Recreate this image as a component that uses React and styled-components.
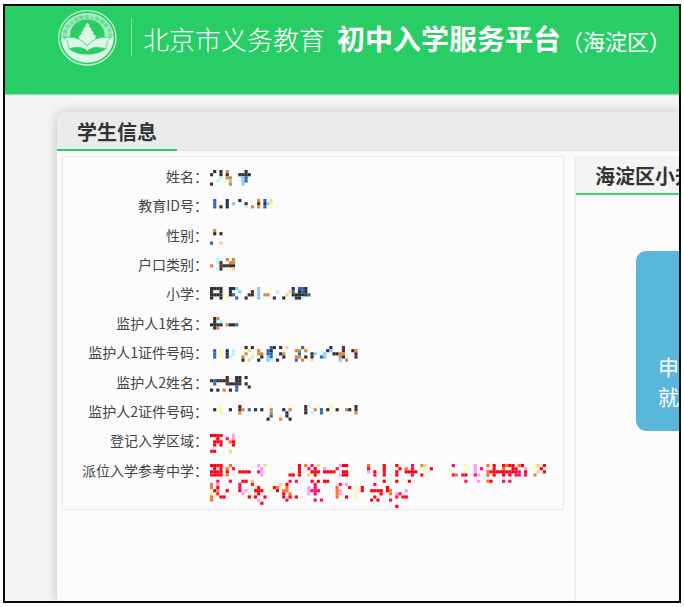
import React from "react";
import styled, { createGlobalStyle } from "styled-components";

const GREEN = "#28ce65";

const GlobalStyle = createGlobalStyle`
  * { box-sizing: border-box; }
  html, body, #root { height: 100%; }
  body {
    margin: 0;
    background: #fff;
    color: #333;
    font-family: "Noto Sans CJK SC", sans-serif;
    font-size: 14px;
  }
  h1, h2, h3, dl, dd { margin: 0; }
`;

const Stage = styled.div`
  height: 100%;
  padding: 4px 3px;
`;

const Frame = styled.div`
  display: flex;
  flex-direction: column;
  height: 100%;
  overflow: hidden;
  border: 2px solid #080808;
  background: #f4f4f4;
`;

const Header = styled.header`
  display: flex;
  flex: none;
  align-items: flex-start;
  height: 89px;
  padding: 4px 0 0 53px;
  border-bottom: 1px solid #8be2ab;
  background: ${GREEN};
  color: #fff;
  white-space: nowrap;
`;

const Logo = styled.svg`
  flex: none;
  width: 59px;
  height: 56px;
`;

const Divider = styled.span`
  flex: none;
  width: 1px;
  height: 38px;
  margin: 8px 11px 0 14px;
  background: #7ee0a2;
`;

const SiteTitle = styled.h1`
  display: flex;
  align-items: baseline;
  padding-top: 8px;
  font-size: 28px;
  line-height: 40px;
  font-weight: 700;
`;

const TitleLead = styled.span`
  margin-right: 12px;
  font-size: 26px;
  font-weight: 300;
`;

const TitleRegion = styled.span`
  font-size: 22px;
  font-weight: 400;
`;

const Card = styled.main`
  display: flex;
  flex: 1;
  flex-direction: column;
  margin: 17px 0 0 52px;
  border-top-left-radius: 9px;
  background: #fbfbfb;
  box-shadow: 0 0 12px rgba(0, 0, 0, 0.22);
`;

const CardHead = styled.div`
  display: flex;
  flex: none;
  height: 39px;
  border-bottom: 1px solid #e0e0e0;
  border-top-left-radius: 9px;
  background: #ebebeb;
`;

const CardTitle = styled.h2`
  height: 39px;
  padding: 0 20px;
  border-bottom: 2px solid ${GREEN};
  font-size: 20px;
  line-height: 40px;
`;

const Columns = styled.div`
  display: grid;
  flex: 1;
  grid-template-columns: minmax(0, 1fr) 105px;
  gap: 10px;
  padding: 5px 0 0 5px;
`;

const InfoPanel = styled.dl`
  display: grid;
  grid-template-rows: repeat(11, 1fr);
  align-self: start;
  min-height: 354px;
  padding: 5px 0 24px;
  border: 1px solid #e9e9e9;
`;

const InfoRow = styled.div`
  display: grid;
  grid-template-columns: 147px minmax(0, 1fr);
`;

const Label = styled.dt`
  padding-right: 2px;
  color: #444;
  line-height: 29px;
  text-align: right;
  white-space: nowrap;
`;

const Value = styled.dd`
  height: 0;
  padding-top: 8px;
`;

const MosaicSvg = styled.svg`
  display: block;
  overflow: visible;
`;

const SidePanel = styled.section`
  overflow: hidden;
  border-top: 1px solid #efefef;
  border-left: 2px solid #efefef;
`;

const SideTitle = styled.h3`
  height: 38px;
  padding-left: 19px;
  overflow: hidden;
  border-bottom: 2px solid #42cf76;
  background: #f4f4f4;
  font-size: 20px;
  line-height: 37px;
  white-space: nowrap;
`;

const ApplyButton = styled.button`
  display: flex;
  align-items: flex-end;
  width: 180px;
  height: 180px;
  margin: 56px 0 0 60px;
  padding: 0 22px 20px;
  border: 0;
  border-radius: 10px;
  background: #5bb6dc;
  color: #fff;
  font: 400 21px/30px "Noto Sans CJK SC", sans-serif;
  text-align: left;
`;

const PALETTE = {
  k: "#303033",
  n: "#29295c",
  b: "#2e66b2",
  l: "#83caff",
  c: "#a5fbff",
  o: "#d5893f",
  y: "#fafaa5",
  p: "#ffd080",
  m: "#552a2e",
  r: "#ff0010",
  h: "#ff1060",
  v: "#ff99ff",
  w: "#ff7020",
};

const CELL = 3.14;

// Each row lists runs of cells: a start column followed by colour letters.
function Mosaic({ rows }) {
  const cells = rows.flatMap((row, y) =>
    row.split(" ").filter(Boolean).flatMap((run) => {
      const [, start, colours] = run.match(/^(\d+)([a-z]+)$/);
      return [...colours].map((c, i) => ({ x: Number(start) + i, y, c }));
    })
  );
  return (
    <MosaicSvg width="340" height={Math.ceil(rows.length * CELL)} aria-hidden="true">
      {cells.map(({ x, y, c }) => (
        <rect
          key={`${x}-${y}`}
          x={x * CELL}
          y={y * CELL}
          width={CELL}
          height={CELL}
          fill={PALETTE[c]}
        />
      ))}
    </MosaicSvg>
  );
}

const FIELDS = [
  ["姓名", ["1k 3k 5o 11m", "0m 3k 5m 9kkkk", "3c 5oo 10lb", "2c 4y 6l 10lb", "0m 6o 10l"]],
  ["教育ID号", ["1b 5n 9n 15o 17b 19p", "1b 3y 5n 7l 11m 15m 17nly", "1b 3n 5n 11c 13o 15oyb 19y"]],
  ["性别", ["1o", "1k 3k", "", "", "0b 3p"]],
  ["户口类别", ["2c 5o 7o", "2c 3m 6wo", "0o 3mkkkk", "2cm 5y 7p"]],
  ["小学", [
    "0kkkk 6kkl 15l 19y 26n 28bbn",
    "0k 3k 6n 9l 13m 15l 21c 25pb 28kbn",
    "0kkkky 6kb 12mm 15l 17oo 24p 26kkkkkb",
    "0k 3k 5y 8b 11k 15l 20k 23k 27nkc",
  ]],
  ["监护人1姓名", ["1ko", "1k 3c", "0kkkk 5okkb", "1ko"]],
  ["监护人1证件号码", [
    "11k 13k 19bk 22k 24p 29b 38n 42m",
    "1b 3y 5n 7c 12p 15o 18bk 27oo 30o 37nl 42m 45ko",
    "1b 3y 5n 7c 11o 13y 15oo 18bb 22ko 28b 32kl 36l 39kkoo 46m",
    "1b 3y 5nc 10o 13c 16k 18lb 23n 27oo 30k 32k 35bl 41ok 46m",
    "10k 12p 15k 18lc 21m 27b 29o 32p 41l 43o",
  ]],
  ["监护人2姓名", ["5m 8nk 11k", "0mbkkkm 8kk", "1b 5mmmmk 11k", "8b 12m", "0n 2k 4o 6m 8b"]],
  ["监护人2证件号码", [
    "3y 9m 30mc 34y 38y 46m",
    "1k 3y 6k 9mo 12b 14k 16k 19o 23n 25o 30m 33o 35b 37k 40k 43ok 46m",
    "3y 9o 19o 24n 30k 32c 35b 38y 46o",
    "19b 22y 24k",
    "18k 22o 25k",
  ]],
  ["登记入学区域", ["0rrrr 7v", "2r 5h 7v", "1rrr 6wr", "1r 3r 7r", "", "0hr 6p"]],
  ["派位入学参考中学", [
    "0rrrr 6w 15v 17p 28r 30w 32h 34p 41vrr 50w 55r 59r 64h 67op 77h 81y 84v 88w 90r 93rwrr 98wr 103yp 106r",
    "1r 3r 5w 7h 16v 28r 31h 33r 36v 40h 50r 55r 60r 62w 64h 67y 70r 84v 86h 90r 93w 96rh 100v 102y 105r",
    "0rrrr 5r 9rrrr 15hv 28r 32rrr 36rrrr 42rr 50v 52r 55r 59r 62rrrr 69y 76y 81y 84v 88w 89rrrr 93rrrrrh 100r 104p 106r",
    "0hrrr 5w 16v 25rr 28r 31p 33r 41vrr 52h 55r 59r 64h 67ry 77ho 80hr 84hv 88w 90r 93r 95r 97hh 100h 103o",
    "",
    "2h 6h 10rr 13p 25h 27h 32r 34r 36rr 55r 59r 63r 81h 85v 88wr 93h 95h",
    "0o 2v 9h 13h 22p 24r 33h 41h 43v 52h",
    "0o 2r 9h 13y 15r 20ro 24w 31v 33h 40w 44r 46y 48r 56r",
    "1ro 5r 9r 11v 14rrr 19y 21r 23ww 31vhhh 40wv 46y 48r 51rrrr 56ro 62v",
    "0y 2h 10v 12y 15r 23r 25w 31v 33h 40wv 46y 54r 57o 59vh",
    "0w 3rr 12r 14r 17r 23r 25r 27r 40w 43r 46y 52r 59h 61rr",
    "0w 15v 24h 33h 35h 51r 53r 57h",
    "16r",
    "59r",
  ]],
];

function BrandLogo() {
  return (
    <Logo viewBox="0 0 177 167" preserveAspectRatio="none" aria-hidden="true">
      <ellipse cx="88" cy="83" rx="86" ry="81" fill="none" stroke="#c4f2d5" strokeWidth="4" />
      <ellipse cx="88" cy="83" rx="79" ry="74" fill="#dcf7e6" />
      <path d="M13 78a75 69 0 0 1 150 0l-21 3a55 53 0 0 0-108 0z" fill="#a9eac1" />
      <ellipse cx="88" cy="76" rx="52" ry="48" fill={GREEN} />
      <path id="logo-arc" d="M22 88a66 61 0 0 1 132 0" fill="none" />
      <text fontSize="15" fontWeight="700" fill="#52d783" fontFamily="Noto Sans CJK SC, sans-serif">
        <textPath href="#logo-arc">北京市义务教育入学服务平台</textPath>
      </text>
      <path
        d="M88 38l6 7-1 4 8 7-3 3 10 8-4 3 11 9-4 3 6 8q-18 1-29 16-11-15-29-16l6-8-4-3 11-9-4-3 10-8-3-3 8-7-1-4z"
        fill="#dcf7e6"
      />
      <path d="M31 114Q68 107 88 123 108 107 146 114 126 133 88 133 50 133 31 114z" fill={GREEN} />
      <path
        d="M18 82Q64 75 88 107 112 75 159 82L148 94 144 116Q108 104 88 122 68 104 33 116L29 94z"
        fill="#dcf7e6"
        stroke={GREEN}
        strokeWidth="2"
      />
    </Logo>
  );
}

export default function App() {
  return (
    <Stage lang="zh-CN">
      <GlobalStyle />
      <Frame>
        <Header>
          <BrandLogo />
          <Divider />
          <SiteTitle>
            <TitleLead>北京市义务教育</TitleLead>
            初中入学服务平台
            <TitleRegion>（海淀区）</TitleRegion>
          </SiteTitle>
        </Header>
        <Card>
          <CardHead>
            <CardTitle>学生信息</CardTitle>
          </CardHead>
          <Columns>
            <InfoPanel>
              {FIELDS.map(([label, rows]) => (
                <InfoRow key={label}>
                  <Label>{label}：</Label>
                  <Value>
                    <Mosaic rows={rows} />
                  </Value>
                </InfoRow>
              ))}
            </InfoPanel>
            <SidePanel>
              <SideTitle>海淀区小升</SideTitle>
              <ApplyButton type="button">
                申
                <br />
                就
              </ApplyButton>
            </SidePanel>
          </Columns>
        </Card>
      </Frame>
    </Stage>
  );
}
